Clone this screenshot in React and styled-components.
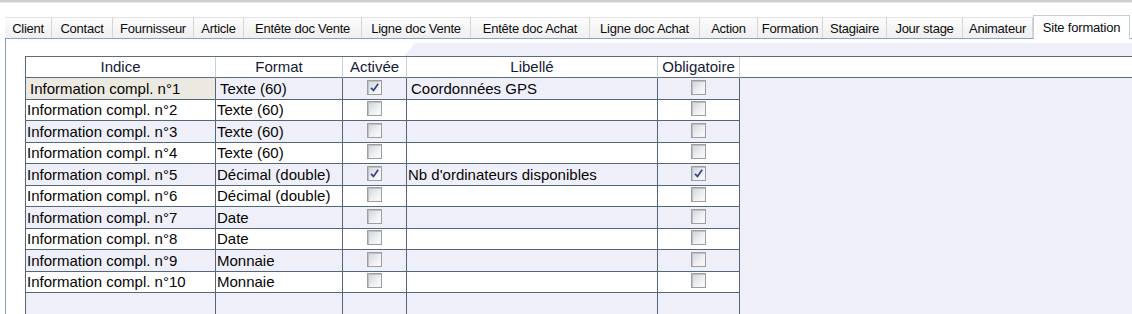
import React from 'react';
import styled, { createGlobalStyle } from 'styled-components';

const Global = createGlobalStyle`
  html, body { margin: 0; padding: 0; background: #fff; }
  body { font-family: "Liberation Sans", Arial, sans-serif; overflow: hidden; }
`;

const Page = styled.div`
  width: 1132px;
  height: 314px;
  overflow: hidden;
  background: #fff;
  display: flex;
  flex-direction: column;
`;

const TopRule = styled.div`
  height: 2px;
  background: #cfcfcf;
  border-bottom: 1px solid #ececec;
  flex: none;
`;

const TabStrip = styled.div`
  flex: none;
  height: 35px;
  display: flex;
  align-items: flex-end;
  margin-left: 5px;
  border-bottom: 1px solid #84a6c6;
`;

const Tab = styled.div`
  box-sizing: border-box;
  width: ${p => p.$w}px;
  height: 21px;
  display: flex;
  align-items: center;
  justify-content: center;
  font-size: 13px;
  letter-spacing: -0.25px;
  color: #0d0d0d;
  white-space: nowrap;
  background: linear-gradient(#fcfcfc, #efefef);
  border-right: 1px solid #d6d6d6;
  border-top: 1px solid #e4e4e4;
`;

const ActiveTab = styled.div`
  box-sizing: border-box;
  width: ${p => p.$w}px;
  height: 24px;
  margin-bottom: -1px;
  display: flex;
  align-items: flex-start;
  justify-content: center;
  padding-top: 4px;
  font-size: 13px;
  letter-spacing: -0.2px;
  color: #0d0d0d;
  white-space: nowrap;
  background: #fff;
  border: 1px solid #c3ced8;
  border-bottom: none;
`;

const Panel = styled.div`
  flex: 1;
  margin-left: 5px;
  border-left: 1px solid #7f9fbf;
  background: #fff;
  display: flex;
  flex-direction: column;
`;

const TopBand = styled.div`
  height: 17px;
  display: flex;
  flex: none;
`;

const Wedge = styled.div`
  flex: 1;
  margin-left: 398px;
  margin-top: 4px;
  background: #eeeff8;
  clip-path: polygon(11px 0, 100% 0, 100% 100%, 0 100%);
`;

const Grid = styled.div`
  flex: 1;
  margin-left: 19px;
  display: grid;
  grid-template-columns: 190px 127px 64px 251px 82px 1fr;
  grid-template-rows: 21px;
  grid-auto-rows: 21.5px;
  background: #eeeff8;
  border-top: 1px solid #5e6e76;
  border-left: 1px solid #53667a;
  font-size: 15px;
`;

const HeadCell = styled.div`
  box-sizing: border-box;
  background: #fff;
  border-bottom: 1px solid #5e6e76;
  border-right: ${p => (p.$filler ? 'none' : '1px solid #c9d0d8')};
  color: #161a36;
  display: flex;
  align-items: center;
  justify-content: center;
  white-space: nowrap;
  padding-bottom: 1px;
`;

const Cell = styled.div`
  box-sizing: border-box;
  background: ${p => (p.$selected ? '#ebe9e0' : p.$odd ? '#eeeff8' : '#fff')};
  border-right: 1px solid #53667a;
  border-bottom: 1px solid #53667a;
  color: #050505;
  display: flex;
  align-items: center;
  justify-content: ${p => (p.$center ? 'center' : 'flex-start')};
  padding-left: ${p => (p.$center ? 0 : p.$current ? 4 : 1)}px;
  white-space: nowrap;
  overflow: hidden;
`;

const Filler = styled.div``;

const Box = styled.span`
  box-sizing: border-box;
  width: 15px;
  height: 15px;
  margin-bottom: 2px;
  border: 1px solid #9c9fa2;
  background: linear-gradient(135deg, #cfd3d6 0%, #eceeef 55%, #fdfdfd 100%);
  box-shadow: inset 1px 1px 0 #bcc1c5, inset -1px -1px 0 #f4f4f4;
  display: flex;
  align-items: center;
  justify-content: center;
`;

const Check = ({ on }) => (
  <Box>
    {on && (
      <svg width="11" height="11" viewBox="0 0 11 11">
        <path d="M2 5.8 L4.5 8.4 L9.2 1.8" fill="none" stroke="#34448f" strokeWidth="1.8" />
      </svg>
    )}
  </Box>
);

const tabs = [
  ['Client', 47],
  ['Contact', 61],
  ['Fournisseur', 81],
  ['Article', 50],
  ['Entête doc Vente', 118],
  ['Ligne doc Vente', 109],
  ['Entête doc Achat', 119],
  ['Ligne doc Achat', 110],
  ['Action', 58],
  ['Formation', 65],
  ['Stagiaire', 64],
  ['Jour stage', 76],
  ['Animateur', 70],
];

const rows = [
  ['Information compl. n°1', 'Texte (60)', true, 'Coordonnées GPS', false],
  ['Information compl. n°2', 'Texte (60)', false, '', false],
  ['Information compl. n°3', 'Texte (60)', false, '', false],
  ['Information compl. n°4', 'Texte (60)', false, '', false],
  ['Information compl. n°5', 'Décimal (double)', true, "Nb d'ordinateurs disponibles", true],
  ['Information compl. n°6', 'Décimal (double)', false, '', false],
  ['Information compl. n°7', 'Date', false, '', false],
  ['Information compl. n°8', 'Date', false, '', false],
  ['Information compl. n°9', 'Monnaie', false, '', false],
  ['Information compl. n°10', 'Monnaie', false, '', false],
];

export default function App() {
  return (
    <Page>
      <Global />
      <TopRule />
      <TabStrip>
        {tabs.map(([t, w]) => (
          <Tab key={t} $w={w}>{t}</Tab>
        ))}
        <ActiveTab $w={97}>Site formation</ActiveTab>
      </TabStrip>
      <Panel>
        <TopBand>
          <Wedge />
        </TopBand>
        <Grid>
          <HeadCell>Indice</HeadCell>
          <HeadCell>Format</HeadCell>
          <HeadCell>Activée</HeadCell>
          <HeadCell>Libellé</HeadCell>
          <HeadCell>Obligatoire</HeadCell>
          <HeadCell $filler />
          {rows.map((r, i) => {
            const odd = i % 2 === 0;
            const cur = i === 0;
            return (
              <React.Fragment key={i}>
                <Cell $odd={odd} $current={cur} $selected={cur}>{r[0]}</Cell>
                <Cell $odd={odd} $current={cur}>{r[1]}</Cell>
                <Cell $odd={odd} $center><Check on={r[2]} /></Cell>
                <Cell $odd={odd} $current={cur}>{r[3]}</Cell>
                <Cell $odd={odd} $center><Check on={r[4]} /></Cell>
                <Filler />
              </React.Fragment>
            );
          })}
          <Cell $odd />
          <Cell $odd />
          <Cell $odd />
          <Cell $odd />
          <Cell $odd />
          <Filler />
        </Grid>
      </Panel>
    </Page>
  );
}
